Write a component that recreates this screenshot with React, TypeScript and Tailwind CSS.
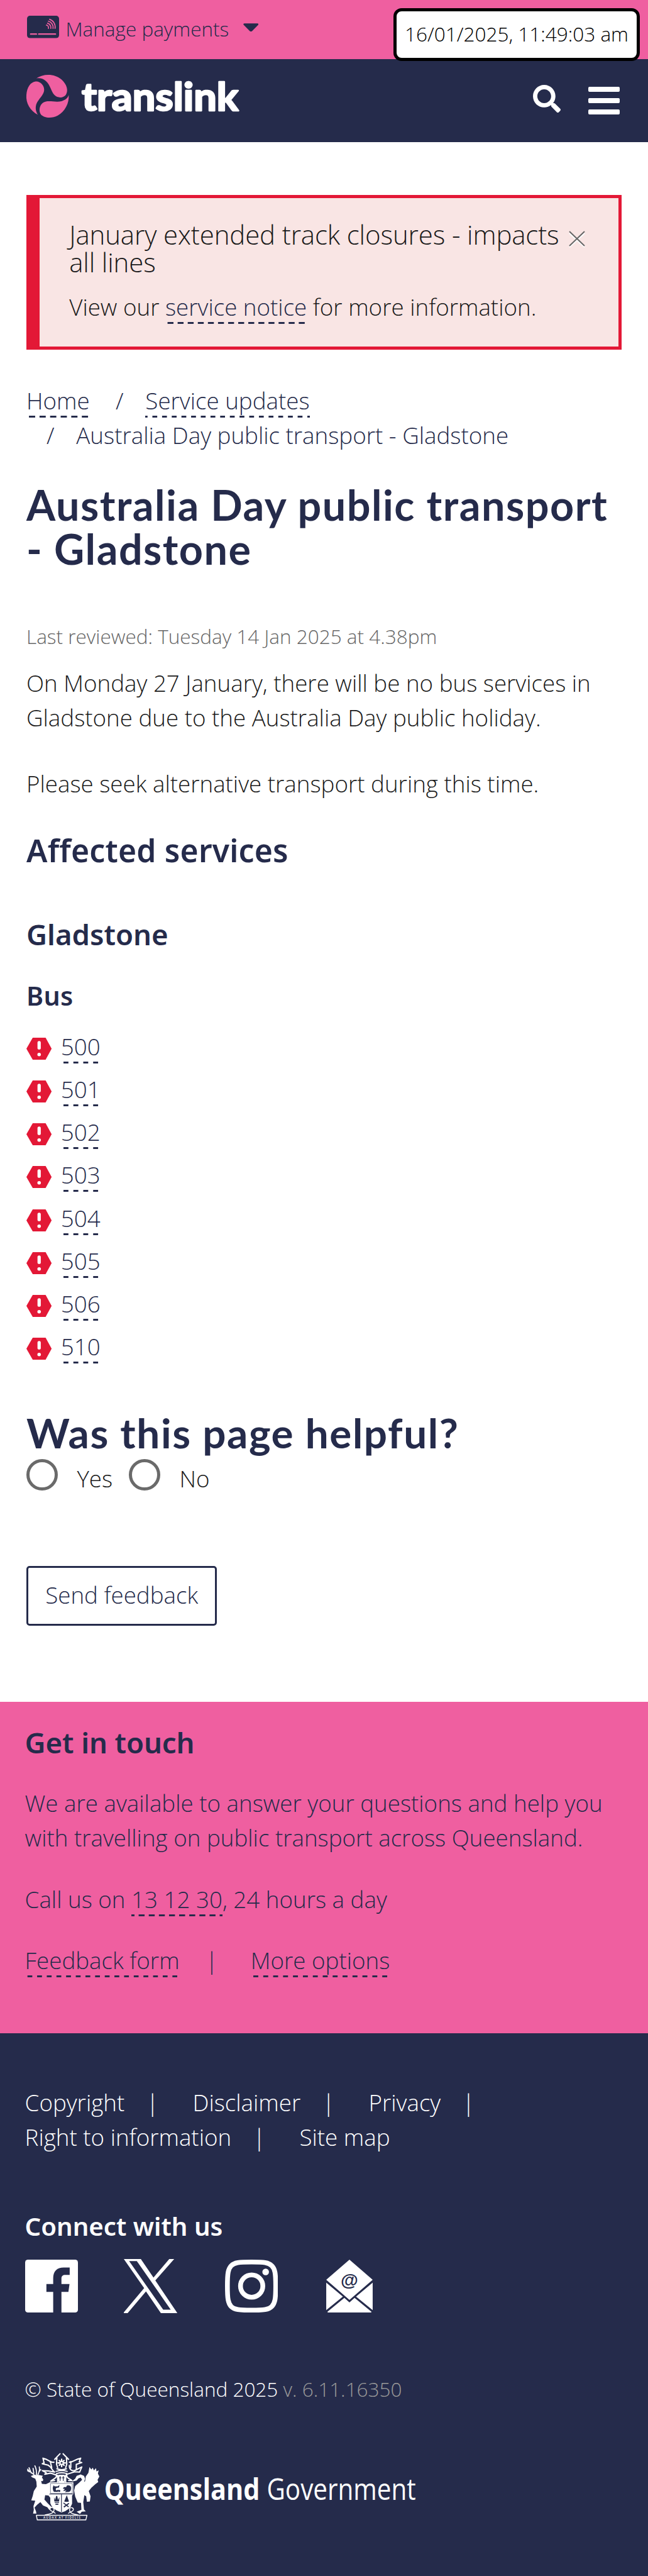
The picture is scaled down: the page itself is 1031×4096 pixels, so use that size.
import React from 'react';
import { FaSearch } from 'react-icons/fa';

const routes = ['500', '501', '502', '503', '504', '505', '506', '510'];

function DashLink({ children, className = '' }: { children: React.ReactNode; className?: string }) {
  return (
    <a
      href="#"
      className={`bg-[linear-gradient(90deg,#252b4b_27%,transparent_27%_73%,#252b4b_73%)] bg-[length:15.7px_3px] bg-bottom [background-repeat:round_no-repeat] pb-[2px] text-[#252b4b] ${className}`}
    >
      {children}
    </a>
  );
}

function CardIcon() {
  return (
    <svg viewBox="59 57 175 122" className="h-[35.6px] w-[51px]">
      <rect x="59" y="57" width="175" height="122" rx="16" fill="#252b4b" />
      <g fill="none" stroke="#ef5fa0" strokeWidth="6" strokeLinecap="round">
        <path d="M182 76C202 82 216 104 212 126" />
        <path d="M176 87C193 91 204 108 201 126" />
        <path d="M171 98C183 101 191 113 189 126" />
        <path d="M165 108C173 110 178 118 176 126" />
        <path d="M79 157H110M123 157H214" strokeWidth="8" />
      </g>
    </svg>
  );
}

function TranslinkLogo() {
  return (
    <svg viewBox="54 380 1170 240" className="h-[70px] w-[341px] overflow-visible">
      <g fill="#ef5fa0">
        <path d="M108 399C150 370 212 375 245 405C275 432 284 465 270 488C256 508 225 508 207 490C188 468 185 435 160 413C145 400 128 396 108 399Z" />
        <path d="M117 598C75 577 50 535 54 490C57 448 75 420 105 416C130 414 152 438 151 462C150 490 120 510 108 540C102 560 105 580 117 598Z" />
        <path d="M285 490C288 535 265 580 225 602C190 620 150 615 133 596C120 578 125 545 145 532C170 515 210 532 245 524C265 518 280 508 285 490Z" />
      </g>
      <text
        x="356"
        y="576"
        textLength="856"
        lengthAdjust="spacingAndGlyphs"
        fill="#fff"
        stroke="#fff"
        strokeWidth="9"
        strokeLinejoin="round"
        className="font-['Lato',sans-serif] text-[210px] font-bold"
      >
        translink
      </text>
    </svg>
  );
}

function AlertHexagon() {
  return (
    <svg viewBox="0 0 46 40" className="relative top-[3px] h-[35px] w-[40.2px]">
      <path d="M0 20L11.5 0H35L46 20L35 40H11.5Z" fill="#e31836" />
      <rect x="20.2" y="6" width="6" height="15.5" rx="3" fill="#fff" />
      <circle cx="23.2" cy="30.5" r="3.2" fill="#fff" />
    </svg>
  );
}

function FacebookIcon() {
  return (
    <svg viewBox="15 54 288 288" className="h-[84px] w-[84px]">
      <rect x="15" y="54" width="288" height="288" rx="15" fill="#fff" />
      <path
        d="M168 343V230H131V187H168V155C168 116 190 97 225 97H258V137H235C220 137 213 143 213 157V187H257L251 230H213V343Z"
        fill="#252b4b"
      />
    </svg>
  );
}

function XIcon() {
  return (
    <svg viewBox="555 51 293 296" className="ml-[73.4px] h-[86.3px] w-[85.4px]">
      <path
        fillRule="evenodd"
        fill="#fff"
        d="M555 51H648L717 152L803 51H830L727 168L848 347H758L676 228L575 347H555V342L666 210ZM584 62L770 327H811L626 62Z"
      />
    </svg>
  );
}

function InstagramIcon() {
  return (
    <svg viewBox="1107 54 290 289" className="ml-[75.6px] h-[84.2px] w-[84.5px]">
      <g fill="none" stroke="#fff" strokeWidth="26">
        <path d="M1252 67C1322 67 1345 70 1362 87C1380 104 1384 128 1384 198C1384 268 1380 292 1362 310C1345 327 1322 330 1252 330C1182 330 1158 327 1141 310C1124 292 1120 268 1120 198C1120 128 1124 104 1141 87C1158 70 1182 67 1252 67Z" />
        <circle cx="1252.5" cy="198" r="61" />
      </g>
      <circle cx="1329" cy="121" r="18" fill="#fff" />
    </svg>
  );
}

function MailIcon() {
  return (
    <svg viewBox="43 38 254 290" className="ml-[77px] h-[84.4px] w-[74px]">
      <g fill="#fff">
        <path d="M170 38L297 148L170 258L43 148Z" />
        <path d="M43 163L134 240L43 314Z" />
        <path d="M297 163L206 240L297 314Z" />
        <path d="M50 322L142 247L170 272L198 247L290 322Q290 328 284 328H56Q50 328 50 322Z" />
      </g>
      <text
        x="170"
        y="182"
        textAnchor="middle"
        fill="#252b4b"
        className="font-['Liberation_Sans',sans-serif] text-[98px] font-bold"
      >
        @
      </text>
    </svg>
  );
}

function GovernmentLogo() {
  return (
    <svg viewBox="15 20 2160 430" className="mt-[74.6px] block h-[125.3px] w-[629.6px]">
      {/* stag */}
      <path
        fill="#fff"
        d="M46 157L62 151L92 152L112 156L106 164L114 178L110 186L102 184L106 200L128 202L150 192V245L156 252L154 278L142 264L124 262L120 286L140 308L160 328L146 342L136 328L112 318L98 300L80 314L66 330L74 350L76 362H58L62 342L60 322L70 292L48 290L56 266L62 240L78 215L76 188L70 172L52 164Z"
      />
      <g fill="none" stroke="#fff" strokeWidth="6" strokeLinecap="round" strokeLinejoin="round">
        <path d="M66 154C58 140 40 140 28 120M48 141L36 112M38 134L28 128M84 152C88 136 98 130 92 108M76 150C78 132 76 118 68 102M62 142L58 116M92 132L100 122" />
      </g>
      {/* brolga */}
      <path
        fill="#fff"
        d="M366 108L376 122L384 112L390 126L402 114L404 132L416 126L412 144L420 160L410 178L414 190L398 202L376 222L362 240L372 268L368 296L352 298L348 268L338 262L332 300L336 340L346 350L324 352L314 364L296 352L322 342L320 304L302 302L288 270L282 236L288 212L312 192L326 178L318 166L306 170L296 182L268 188L288 172L296 156L318 149L336 156L342 172L336 190L342 186L346 160L360 140Z"
      />
      {/* crest and mantling */}
      <g fill="none" stroke="#fff" strokeWidth="7" strokeLinecap="round" strokeLinejoin="round">
        <path d="M205 36L176 66L188 58L186 92L192 112M222 36L252 66L240 58L242 92L236 112" />
        <path d="M172 82C150 88 146 66 112 60L118 86L108 90L140 98C160 108 158 124 176 136C150 130 136 128 108 128L130 140L122 148L152 142C168 146 178 150 186 152" />
        <path d="M256 82C274 84 284 66 318 60L310 80L324 84L294 94V124M256 100C256 124 270 130 284 128L324 108L312 136L286 134C266 140 252 146 240 148" />
        <path d="M152 78L160 112M264 78V112" />
        <path d="M188 118Q214 128 240 118M184 132Q214 122 244 132M186 144Q214 134 242 144" />
        <path d="M186 152C190 168 170 172 154 186L176 182M242 152C238 168 258 172 270 182L252 182M192 154V190M236 154V190" />
        <path d="M214 66V106M194 86H234M201 73L227 99M227 73L201 99" strokeWidth="8" />
      </g>
      <circle cx="214" cy="86" r="5" fill="#252b4b" />
      <rect x="194" y="150" width="40" height="42" rx="8" fill="#fff" />
      <path d="M206 158V184M200 167H212M223 158V184M217 167H229" stroke="#252b4b" strokeWidth="4" />
      {/* shield */}
      <path d="M147 192H278V258L271 264V308Q262 342 213 356Q162 342 152 306V262L147 258Z" fill="#fff" />
      <path d="M153 198H272V252H153Z" fill="none" stroke="#252b4b" strokeWidth="2" />
      <path d="M147 256H278M213 258V354" stroke="#252b4b" strokeWidth="4" />
      <path
        fill="#252b4b"
        d="M170 208L176 214H192L202 206L200 220L188 222Q178 226 184 236L196 232L194 244H172Q160 228 170 208ZM196 234H206V244H196ZM222 228Q222 214 238 218L244 208Q264 206 266 222Q266 242 254 244L232 246L240 236L222 240L232 228ZM172 272L178 288L184 266H190L194 288L202 272L200 296H174ZM176 300H200V304H176ZM180 308H196V314H180ZM242 262L254 296Q242 300 228 296ZM222 306L226 302L254 324L250 328ZM252 304L256 308L228 330L224 324Z"
      />
      {/* scroll and motto */}
      <g fill="none" stroke="#fff" strokeLinejoin="round">
        <path d="M76 372H352L346 397H81Z" strokeWidth="5" />
        <path
          d="M122 370C160 364 176 356 172 336C168 326 150 326 150 338C150 350 172 350 180 362M304 370C268 364 254 356 258 336C262 326 280 330 278 342C276 352 258 352 250 362"
          strokeWidth="5"
        />
      </g>
      <text
        x="114"
        y="390"
        textLength="202"
        fill="#fff"
        className="font-['Open_Sans',sans-serif] text-[16px] font-semibold"
      >
        AUDAX AT FIDELIS
      </text>
      <text
        x="446"
        y="287"
        textLength="850"
        lengthAdjust="spacingAndGlyphs"
        fill="#fff"
        className="font-['Open_Sans',sans-serif] text-[160px] font-bold"
      >
        Queensland
      </text>
      <text
        x="1334"
        y="287"
        textLength="814"
        lengthAdjust="spacingAndGlyphs"
        fill="#fff"
        className="font-['Open_Sans',sans-serif] text-[160px] font-normal"
      >
        Government
      </text>
    </svg>
  );
}

function Pipe() {
  return <span className="mr-[54px] ml-[34.4px]">|</span>;
}

export default function App() {
  return (
    <div className="flex h-[4096px] w-[1031px] flex-col overflow-hidden bg-white font-['Open_Sans',sans-serif] text-[36.73px] leading-[55px] font-light text-[#1a1a1a]">
      <div className="relative flex h-[94.4px] shrink-0 bg-[#ef5fa0] pt-[25px] pl-[43.4px] text-[31.5px] leading-[41px] text-[#252b4b]">
        <CardIcon />
        <span className="ml-[10px]">Manage payments</span>
        <svg viewBox="0 0 28 15" className="mt-[11.5px] ml-[22.5px] h-[13.5px] w-[24.5px]">
          <path d="M2 0H26Q29 1 27 3L16 14Q14 16 12 14L1 3Q-1 1 2 0Z" fill="#252b4b" />
        </svg>
        <div className="absolute top-[13px] left-[626px] flex h-[84px] w-[392px] justify-center rounded-[13px] border-[5px] border-black bg-white pt-[15px] text-black">
          16/01/2025, 11:49:03 am
        </div>
      </div>

      <header className="flex h-[131.2px] shrink-0 bg-[#252b4b] pt-[25px] pl-[42px]">
        <TranslinkLogo />
        <FaSearch className="mt-[15.5px] ml-[465px] h-[44px] w-[44px] text-white" />
        <div className="mt-[18.6px] ml-[43.6px] flex h-[44px] w-[50px] flex-col justify-between">
          <span className="h-2 rounded-[2px] bg-white" />
          <span className="h-2 rounded-[2px] bg-white" />
          <span className="h-2 rounded-[2px] bg-white" />
        </div>
      </header>

      <main className="flex h-[2480px] shrink-0 flex-col items-start px-[42px]">
        <section className="mt-[84px] h-[246.6px] w-[947px] border-[5px] border-l-[21px] border-[#e31836] bg-[#f9e5e4] pt-[36.2px] pl-[47.2px]">
          <div className="flex">
            <div className="text-[41.97px] leading-[44.3px] tracking-[-0.12px] whitespace-nowrap">
              January extended track closures - impacts
              <br />
              all lines
            </div>
            <svg viewBox="0 0 26 28" className="mt-[15px] ml-[15px] h-[28px] w-[26px]">
              <path d="M1 5L25 27M25 5L1 27" stroke="#fff" strokeWidth="2" />
              <path d="M1 2L25 25M25 2L1 25" stroke="#666" strokeWidth="2" />
            </svg>
          </div>
          <p className="mt-[21.2px]">
            View our <DashLink>service notice</DashLink> for more information.
          </p>
        </section>

        <nav className="mt-[54px] text-[#252b4b]">
          <div>
            <DashLink>Home</DashLink>
            <span className="mr-[34.8px] ml-[41.5px]">/</span>
            <DashLink>Service updates</DashLink>
          </div>
          <div>
            <span className="mr-[34.8px] ml-[32px]">/</span>
            <span>Australia Day public transport - Gladstone</span>
          </div>
        </nav>

        <h1 className="mt-[47.1px] font-['Lato',sans-serif] text-[66.5px] leading-[70px] font-bold tracking-[1.5px] whitespace-nowrap text-[#252b4b]">
          Australia Day public transport
          <br />- Gladstone
        </h1>
        <p className="mt-[80.7px] text-[31.5px] leading-[47px] text-[#666]">
          Last reviewed: Tuesday 14 Jan 2025 at 4.38pm
        </p>
        <p className="mt-[23.7px] whitespace-nowrap">
          On Monday 27 January, there will be no bus services in
          <br />
          Gladstone due to the Australia Day public holiday.
        </p>
        <p className="mt-[50.5px]">Please seek alternative transport during this time.</p>

        <h2 className="mt-[47.8px] font-['Noto_Sans',sans-serif] text-[49.8px] leading-[60px] font-semibold tracking-[0.2px] text-[#252b4b]">
          Affected services
        </h2>
        <h3 className="mt-[74.6px] font-['Noto_Sans',sans-serif] text-[45.5px] leading-[56px] font-semibold text-[#252b4b]">
          Gladstone
        </h3>
        <h4 className="mt-[45.4px] font-['Noto_Sans',sans-serif] text-[41.1px] leading-[50px] font-semibold tracking-[0.4px] text-[#252b4b]">
          Bus
        </h4>
        <ul className="mt-[22.1px]">
          {routes.map((route) => (
            <li key={route} className="flex h-[68.25px] items-center">
              <AlertHexagon />
              <span className="ml-[14.6px]">
                <DashLink>{route}</DashLink>
              </span>
            </li>
          ))}
        </ul>

        <h2 className="mt-[66.8px] font-['Lato',sans-serif] text-[65.6px] leading-[70px] font-bold tracking-[1.6px] text-[#252b4b]">
          Was this page helpful?
        </h2>
        <div className="mt-[7.3px] flex h-[50px]">
          <span className="h-[50px] w-[50px] rounded-full border-[5px] border-[#6a6a6a]" />
          <span className="mt-[4px] ml-[30.4px]">Yes</span>
          <span className="ml-[26px] h-[50px] w-[50px] rounded-full border-[5px] border-[#6a6a6a]" />
          <span className="mt-[4px] ml-[30.5px]">No</span>
        </div>
        <button className="mt-[120.2px] h-[94.5px] w-[303.4px] rounded-[5px] border-[3px] border-[#252b4b] pb-[2px] text-[#252b4b]">
          Send feedback
        </button>
      </main>

      <section className="h-[527px] shrink-0 bg-[#ef5fa0] pt-[36.9px] pl-[39.6px] text-[#252b4b]">
        <h2 className="font-['Noto_Sans',sans-serif] text-[45.5px] leading-[56px] font-semibold tracking-[-0.1px]">
          Get in touch
        </h2>
        <p className="mt-[42px] whitespace-nowrap">
          We are available to answer your questions and help you
          <br />
          with travelling on public transport across Queensland.
        </p>
        <p className="mt-[42.5px]">
          Call us on <DashLink>13 12 30</DashLink>, 24 hours a day
        </p>
        <p className="mt-[41.7px]">
          <DashLink>Feedback form</DashLink>
          <span className="mr-[52px] ml-[41.3px]">|</span>
          <DashLink>More options</DashLink>
        </p>
      </section>

      <footer className="flex-1 bg-[#252b4b] pt-[83px] pl-[39.6px] text-white">
        <div>
          Copyright
          <Pipe />
          Disclaimer
          <Pipe />
          Privacy
          <Pipe />
        </div>
        <div>
          Right to information
          <Pipe />
          Site map
        </div>
        <h3 className="mt-[89.6px] font-['Noto_Sans',sans-serif] text-[40.2px] leading-[50px] font-semibold">
          Connect with us
        </h3>
        <div className="mt-[26.4px] flex h-[86.5px] items-center">
          <FacebookIcon />
          <XIcon />
          <InstagramIcon />
          <MailIcon />
        </div>
        <p className="mt-[96.6px] text-[31.5px] leading-[48px]">
          © State of Queensland 2025 <span className="text-[#999]">v. 6.11.16350</span>
        </p>
        <GovernmentLogo />
      </footer>
    </div>
  );
}
